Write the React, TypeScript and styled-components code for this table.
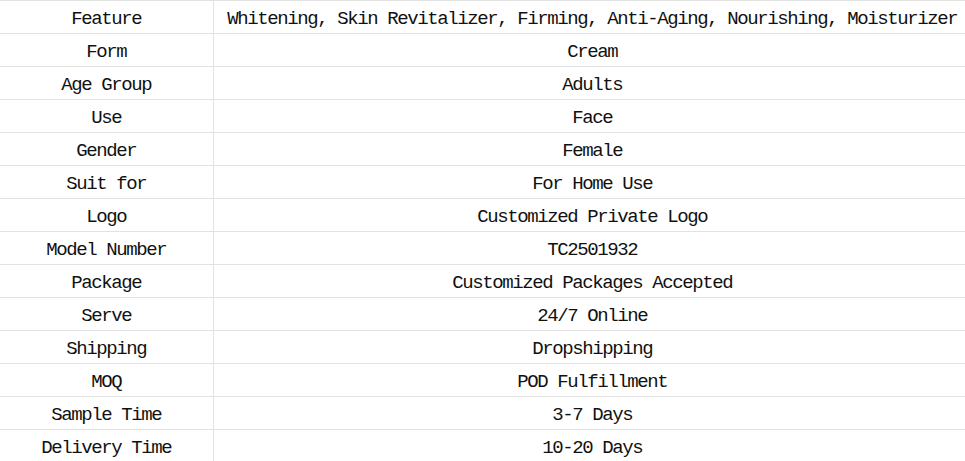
import React from "react";
import styled, { createGlobalStyle } from "styled-components";

const Global = createGlobalStyle`
  html, body { margin: 0; padding: 0; background: #ffffff; overflow: hidden; }
  body { font-family: "Liberation Mono", "DejaVu Sans Mono", monospace; }
`;

const Table = styled.table`
  width: 965px;
  border-collapse: collapse;
  table-layout: fixed;
  color: #111111;
  font-family: "Liberation Mono", "DejaVu Sans Mono", monospace;
  font-size: 19px;
  letter-spacing: -1.4px;
`;

const Row = styled.tr`
  height: 33px;
`;

const Cell = styled.td<{ $label?: boolean }>`
  box-sizing: border-box;
  height: 33px;
  padding: 4px 0 0 ${(p) => (p.$label ? "0" : "6px")};
  border: 1px solid #e2e2e2;
  border-left: ${(p) => (p.$label ? "none" : "1px solid #e2e2e2")};
  border-right: ${(p) => (p.$label ? "1px solid #e2e2e2" : "none")};
  width: ${(p) => (p.$label ? "213px" : "auto")};
  text-align: center;
  vertical-align: middle;
  white-space: nowrap;
  line-height: 20px;
`;

const rows: [string, string][] = [
  ["Feature", "Whitening, Skin Revitalizer, Firming, Anti-Aging, Nourishing, Moisturizer"],
  ["Form", "Cream"],
  ["Age Group", "Adults"],
  ["Use", "Face"],
  ["Gender", "Female"],
  ["Suit for", "For Home Use"],
  ["Logo", "Customized Private Logo"],
  ["Model Number", "TC2501932"],
  ["Package", "Customized Packages Accepted"],
  ["Serve", "24/7 Online"],
  ["Shipping", "Dropshipping"],
  ["MOQ", "POD Fulfillment"],
  ["Sample Time", "3-7 Days"],
  ["Delivery Time", "10-20 Days"],
];

export default function App() {
  return (
    <>
      <Global />
      <Table>
        <tbody>
          {rows.map(([k, v]) => (
            <Row key={k}>
              <Cell $label>{k}</Cell>
              <Cell>{v}</Cell>
            </Row>
          ))}
        </tbody>
      </Table>
    </>
  );
}
